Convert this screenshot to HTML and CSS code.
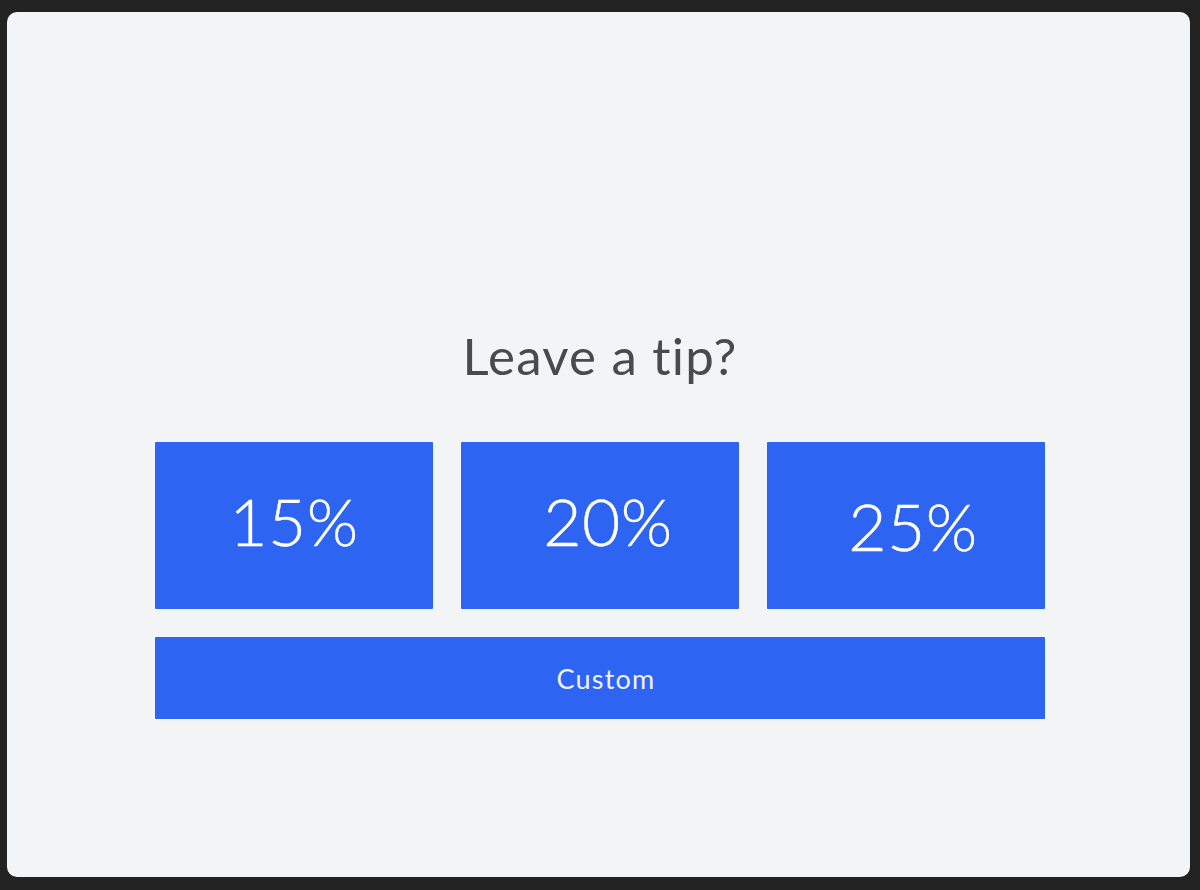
FILE: index.html
```html
<!DOCTYPE html>
<html lang="en">
<head>
<meta charset="utf-8">
<title>Leave a tip?</title>
<link rel="stylesheet" href="styles.css">
</head>
<body>
<div class="screen">
  <h1 class="title">Leave a tip?</h1>
  <div class="options">
    <button class="tip tip-15">15%</button>
    <button class="tip tip-20">20%</button>
    <button class="tip tip-25">25%</button>
  </div>
  <button class="custom">Custom</button>
</div>
</body>
</html>
```

FILE: styles.css
```css
html, body {
  margin: 0;
  padding: 0;
}
body {
  background: #222222;
  width: 1200px;
  height: 890px;
  overflow: hidden;
  font-family: "Lato", "Noto Sans", sans-serif;
}
.screen {
  margin: 12px 10px 0 7px;
  height: 865px;
  box-sizing: border-box;
  background: #f3f4f6;
  border-radius: 10px;
  padding: 314px 145px 0 148px;
  display: flex;
  flex-direction: column;
}
.title {
  margin: 0;
  font-weight: 400;
  font-size: 51px;
  line-height: 60px;
  color: #4a4a4c;
  text-align: center;
  letter-spacing: 1.2px;
}
.options {
  margin-top: 56px;
  display: grid;
  grid-template-columns: repeat(3, 1fr);
  gap: 28px;
}
.tip, .custom {
  border: none;
  margin: 0;
  padding: 0;
  background: #2d64f1;
  color: #ffffff;
  font-family: "Lato", "Noto Sans", sans-serif;
  border-radius: 1px;
}
.tip {
  height: 167px;
  font-size: 66px;
  font-weight: 300;
  letter-spacing: 0.5px;
  padding-bottom: 10px;
  -webkit-text-stroke: 0.4px #ffffff;
}
.tip-20 { padding-left: 16px; }
.tip-25 { padding-left: 14px; padding-bottom: 0; }
.custom {
  margin-top: 28px;
  height: 82px;
  padding-left: 12px;
  font-size: 27px;
  font-weight: 400;
  letter-spacing: 1.2px;
  color: #eef3ff;
}
```
